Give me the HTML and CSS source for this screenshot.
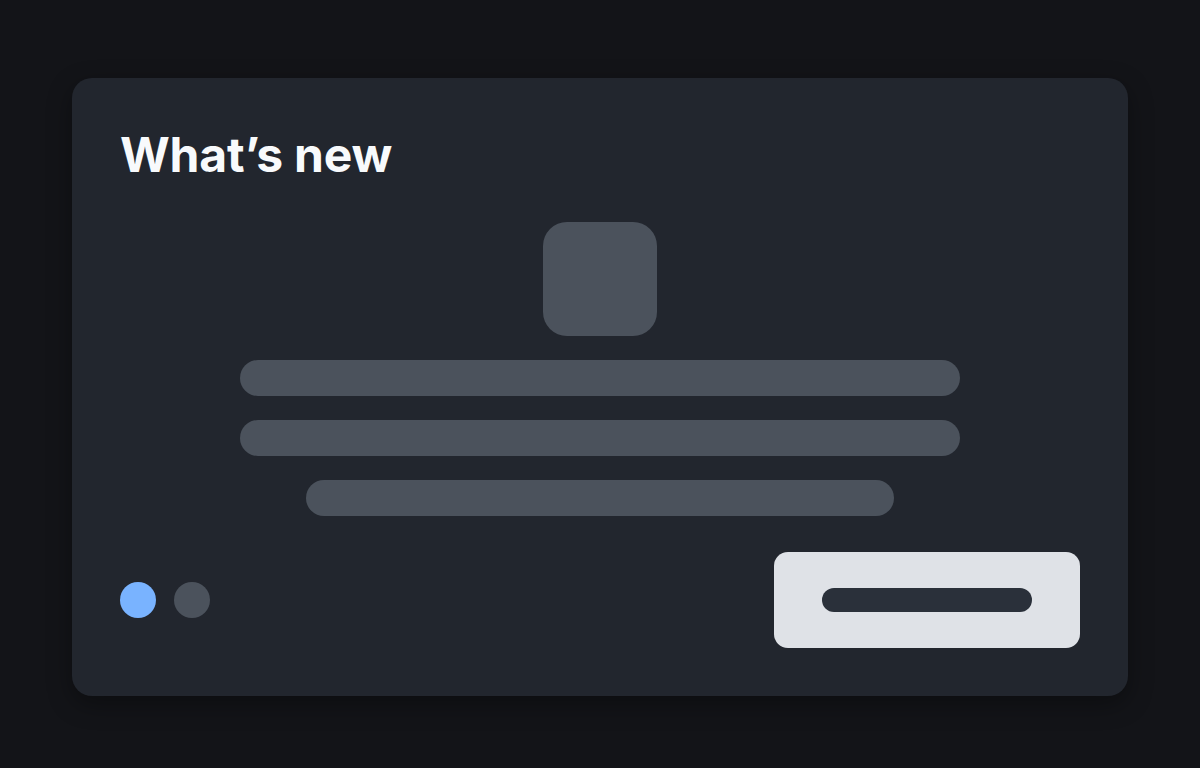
FILE: index.html
```html
<!DOCTYPE html>
<html lang="en">
<head>
<meta charset="utf-8">
<title>What's new</title>
<link rel="stylesheet" href="styles.css">
</head>
<body>
<div class="page">
  <section class="card">
    <h1 class="title">What’s new</h1>
    <div class="body">
      <div class="icon"></div>
      <div class="lines">
        <div class="line"></div>
        <div class="line"></div>
        <div class="line short"></div>
      </div>
    </div>
    <div class="footer">
      <div class="dots">
        <span class="dot active"></span>
        <span class="dot"></span>
      </div>
      <button class="btn"><span class="btn-bar"></span></button>
    </div>
  </section>
</div>
</body>
</html>
```
FILE: styles.css
```css
html, body {
  margin: 0;
  padding: 0;
  background: #131418;
  font-family: Inter, "Noto Sans", sans-serif;
}
.page {
  width: 1200px;
  height: 768px;
  box-sizing: border-box;
  padding: 78px 72px 72px;
}
.card {
  width: 1056px;
  height: 618px;
  box-sizing: border-box;
  padding: 48px;
  background: #22262e;
  border-radius: 20px;
  box-shadow: 0 8px 24px rgba(0, 0, 0, 0.35);
  display: flex;
  flex-direction: column;
}
.title {
  margin: 0;
  font-size: 48px;
  font-weight: 700;
  line-height: 58px;
  color: #f8fafc;
  letter-spacing: -0.2px;
}
.body {
  margin-top: 38px;
  display: flex;
  flex-direction: column;
  align-items: center;
  gap: 24px;
}
.icon {
  width: 114px;
  height: 114px;
  border-radius: 24px;
  background: #4b525c;
}
.lines {
  display: flex;
  flex-direction: column;
  align-items: center;
  gap: 24px;
}
.line {
  width: 720px;
  height: 36px;
  border-radius: 18px;
  background: #4b525c;
}
.line.short {
  width: 588px;
}
.footer {
  margin-top: 36px;
  display: flex;
  align-items: center;
  justify-content: space-between;
}
.dots {
  display: flex;
  gap: 18px;
}
.dot {
  width: 36px;
  height: 36px;
  border-radius: 50%;
  background: #4b525c;
}
.dot.active {
  background: #79b3ff;
}
.btn {
  width: 306px;
  height: 96px;
  border: none;
  border-radius: 14px;
  background: #dfe2e7;
  padding: 0;
  display: flex;
  align-items: center;
  justify-content: center;
}
.btn-bar {
  width: 210px;
  height: 24px;
  border-radius: 12px;
  background: #2a303a;
}
```
